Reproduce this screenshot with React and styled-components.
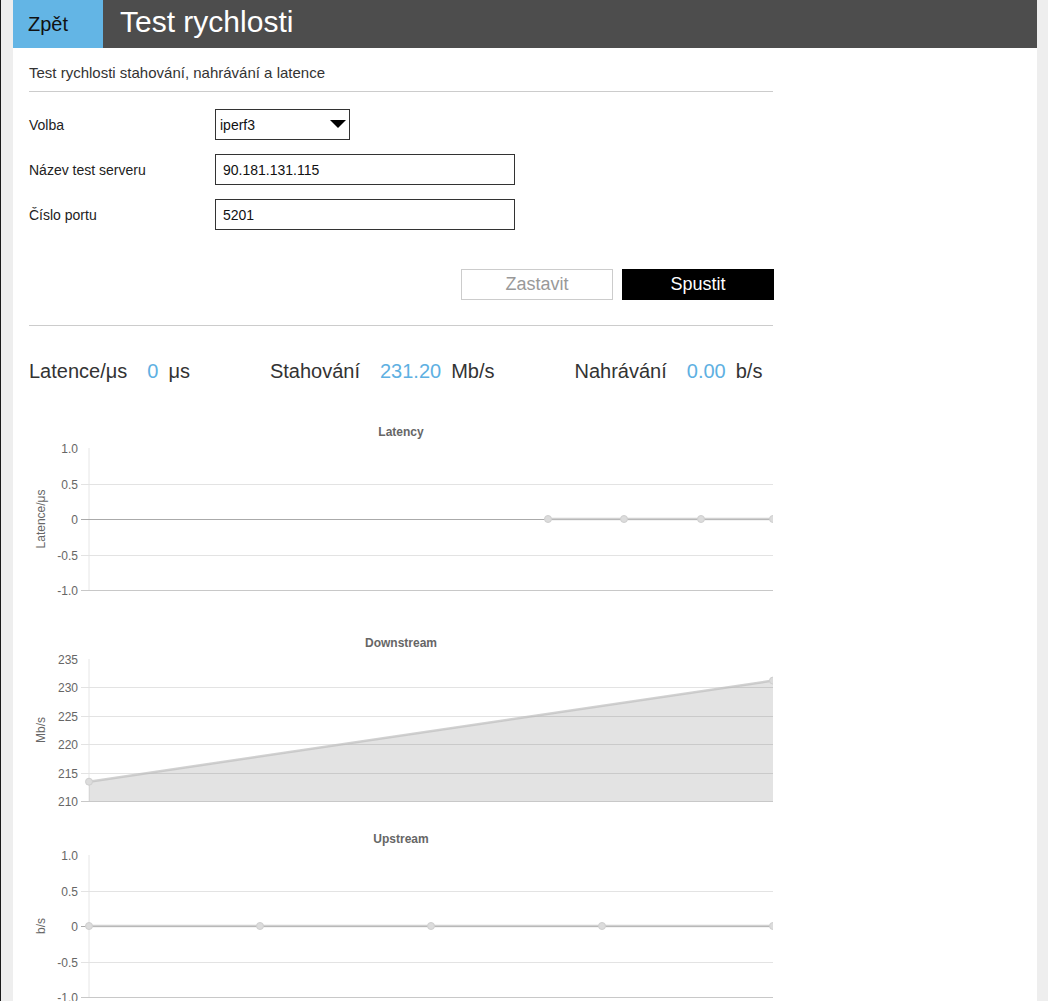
import React from 'react';
import styled, { createGlobalStyle } from 'styled-components';

const GlobalStyle = createGlobalStyle`
  html, body {
    margin: 0;
    padding: 0;
    background: #eeeeee;
    font-family: "Liberation Sans", Arial, Helvetica, sans-serif;
  }
  * { box-sizing: border-box; }
`;

const Frame = styled.div`
  min-height: 100vh;
  border-left: 1px solid #1a1a1a;
  padding: 0 11px 0 12px;
  background: #eeeeee;
`;

const Panel = styled.div`
  width: 1024px;
  min-height: 100vh;
  background: #fff;
`;

const TopBar = styled.header`
  display: flex;
  align-items: center;
  height: 48px;
  background: #4d4d4d;
`;

const BackButton = styled.button`
  width: 90px;
  height: 48px;
  border: none;
  margin: 0;
  padding: 0 0 0 15px;
  text-align: left;
  background: #63b5e5;
  color: #111;
  font-family: inherit;
  font-size: 20px;
  cursor: pointer;
`;

const PageTitle = styled.h1`
  margin: 0 0 4px 17px;
  font-size: 30px;
  font-weight: normal;
  color: #fff;
`;

const Content = styled.main`
  width: 744px;
  margin-left: 16px;
`;

const Intro = styled.p`
  margin: 0;
  padding: 16px 0 10px;
  font-size: 15px;
  line-height: 17px;
  color: #333;
  border-bottom: 1px solid #cccccc;
`;

const Form = styled.section`
  padding: 17px 0 25px;
  border-bottom: 1px solid #cccccc;
`;

const Rows = styled.div`
  display: flex;
  flex-direction: column;
  gap: 14px;
`;

const Row = styled.div`
  display: flex;
  align-items: center;
  height: 31px;
`;

const Label = styled.label`
  width: 186px;
  font-size: 14px;
  color: #222;
`;

const SelectWrap = styled.div`
  position: relative;
  width: 135px;
  height: 31px;
`;

const Select = styled.select`
  appearance: none;
  width: 100%;
  height: 100%;
  border: 1px solid #333;
  border-radius: 0;
  padding: 0 0 0 4px;
  background: #fff;
  font-family: inherit;
  font-size: 14px;
  color: #111;
`;

const Caret = styled.svg`
  position: absolute;
  top: 11px;
  left: 115px;
  pointer-events: none;
`;

const Input = styled.input`
  width: 300px;
  height: 31px;
  border: 1px solid #333;
  border-radius: 0;
  padding: 0 7px;
  font-family: inherit;
  font-size: 14px;
  color: #111;
`;

const Actions = styled.div`
  display: flex;
  justify-content: flex-end;
  gap: 9px;
  margin: 39px -1px 0 0;
`;

const Button = styled.button`
  width: 152px;
  height: 31px;
  padding: 0;
  border: 1px solid ${p => (p.$primary ? '#000' : '#cccccc')};
  background: ${p => (p.$primary ? '#000' : '#fff')};
  color: ${p => (p.$primary ? '#fff' : '#999')};
  font-family: inherit;
  font-size: 18px;
  cursor: pointer;
`;

const Stats = styled.div`
  display: flex;
  gap: 80px;
  padding-top: 34px;
  font-size: 20px;
  line-height: 23px;
  color: #333;
`;

const Stat = styled.div`
  display: flex;
`;

const StatValue = styled.span`
  margin: 0 10px 0 20px;
  color: #5eb0e2;
`;

const Charts = styled.div`
  margin-top: 37px;
`;

const ChartBox = styled.svg`
  display: block;
  overflow: hidden;
  margin-bottom: ${p => p.$gap}px;
  font-family: "Liberation Sans", Arial, Helvetica, sans-serif;
`;

const TOP = 28;
const BOTTOM = 170;
const LEFT = 60;
const RIGHT = 744;

function Chart({ title, axis, ticks, min, max, zeroLine, points, filled, gap }) {
  const y = v => TOP + ((max - v) / (max - min)) * (BOTTOM - TOP);
  const line = points.map(([x, v]) => `${x},${y(v)}`).join(' ');
  const area = `${LEFT},${BOTTOM} ${line} ${RIGHT},${BOTTOM}`;

  return (
    <ChartBox width="744" height="190" $gap={gap}>
      <text x="372" y="16" textAnchor="middle" fontSize="12" fontWeight="bold" fill="#666">
        {title}
      </text>
      <text
        x="0"
        y="0"
        transform={`translate(16 ${(TOP + BOTTOM) / 2}) rotate(-90)`}
        textAnchor="middle"
        fontSize="12"
        fill="#666"
      >
        {axis}
      </text>
      <line x1={LEFT} y1={TOP} x2={LEFT} y2={BOTTOM} stroke="#e6e6e6" />
      {ticks.map((t, i) => {
        const ty = Math.round(y(t.v)) + 0.5;
        let stroke = '#e3e3e3';
        if (i === ticks.length - 1) stroke = '#c8c8c8';
        else if (zeroLine && t.v === 0) stroke = '#aaaaaa';
        return (
          <g key={t.label}>
            {i > 0 && <line x1={LEFT - 8} y1={ty} x2={RIGHT} y2={ty} stroke={stroke} />}
            <text x={LEFT - 11} y={ty + 4} textAnchor="end" fontSize="12" fill="#666">
              {t.label}
            </text>
          </g>
        );
      })}
      {filled && <polygon points={area} fill="rgba(0,0,0,0.11)" />}
      <polyline points={line} fill="none" stroke="rgba(190,190,190,0.7)" strokeWidth="2.5" />
      {points.map(([x, v]) => (
        <circle key={x} cx={x} cy={y(v)} r="3.5" fill="#dcdcdc" stroke="#cfcfcf" strokeWidth="1" />
      ))}
    </ChartBox>
  );
}

const unitTicks = [
  { v: 1, label: '1.0' },
  { v: 0.5, label: '0.5' },
  { v: 0, label: '0' },
  { v: -0.5, label: '-0.5' },
  { v: -1, label: '-1.0' },
];

const rateTicks = [235, 230, 225, 220, 215, 210].map(v => ({ v, label: String(v) }));

export default function App() {
  return (
    <>
      <GlobalStyle />
      <Frame>
        <Panel>
          <TopBar>
            <BackButton>Zpět</BackButton>
            <PageTitle>Test rychlosti</PageTitle>
          </TopBar>
          <Content>
            <Intro>Test rychlosti stahování, nahrávání a latence</Intro>
            <Form>
              <Rows>
                <Row>
                  <Label>Volba</Label>
                  <SelectWrap>
                    <Select defaultValue="iperf3">
                      <option value="iperf3">iperf3</option>
                    </Select>
                    <Caret width="16" height="8" viewBox="0 0 16 8">
                      <polygon points="0,0 16,0 8,8" fill="#000" />
                    </Caret>
                  </SelectWrap>
                </Row>
                <Row>
                  <Label>Název test serveru</Label>
                  <Input defaultValue="90.181.131.115" />
                </Row>
                <Row>
                  <Label>Číslo portu</Label>
                  <Input defaultValue="5201" />
                </Row>
              </Rows>
              <Actions>
                <Button>Zastavit</Button>
                <Button $primary>Spustit</Button>
              </Actions>
            </Form>
            <Stats>
              <Stat>
                <span>Latence/μs</span>
                <StatValue>0</StatValue>
                <span>μs</span>
              </Stat>
              <Stat>
                <span>Stahování</span>
                <StatValue>231.20</StatValue>
                <span>Mb/s</span>
              </Stat>
              <Stat>
                <span>Nahrávání</span>
                <StatValue>0.00</StatValue>
                <span>b/s</span>
              </Stat>
            </Stats>
            <Charts>
              <Chart
                title="Latency"
                axis="Latence/μs"
                ticks={unitTicks}
                min={-1}
                max={1}
                zeroLine
                points={[[519, 0], [595, 0], [672, 0], [744, 0]]}
                gap={21}
              />
              <Chart
                title="Downstream"
                axis="Mb/s"
                ticks={rateTicks}
                min={210}
                max={235}
                filled
                points={[[60, 213.4], [744, 231.2]]}
                gap={6}
              />
              <Chart
                title="Upstream"
                axis="b/s"
                ticks={unitTicks}
                min={-1}
                max={1}
                zeroLine
                points={[[60, 0], [231, 0], [402, 0], [573, 0], [744, 0]]}
                gap={0}
              />
            </Charts>
          </Content>
        </Panel>
      </Frame>
    </>
  );
}
